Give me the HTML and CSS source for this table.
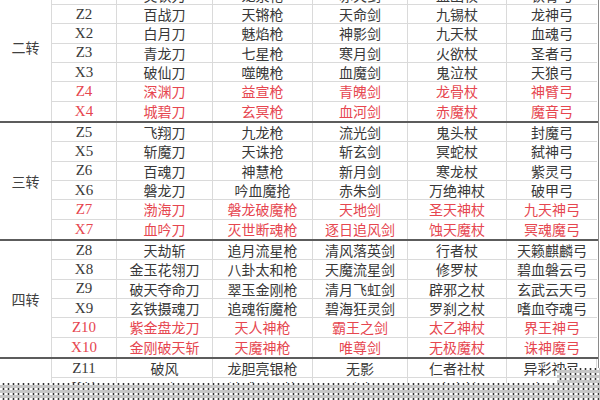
FILE: index.html
```html
<!DOCTYPE html>
<html lang="zh">
<head>
<meta charset="utf-8">
<link rel="stylesheet" href="styles.css">
</head>
<body>
<div class="sheet">
  <section class="sec sec8">
    <div class="grp">二转</div>
    <div class="c code">Z1</div><div class="c">烈风刀</div><div class="c">龙泉枪</div><div class="c">赤火剑</div><div class="c">血幽杖</div><div class="c">铁骨弓</div>
    <div class="c code">X1</div><div class="c">炎铁刀</div><div class="c">龙泉枪</div><div class="c">赤火剑</div><div class="c">血幽杖</div><div class="c">铁骨弓</div>
    <div class="c code">Z2</div><div class="c">百战刀</div><div class="c">天锵枪</div><div class="c">天命剑</div><div class="c">九锡杖</div><div class="c">龙神弓</div>
    <div class="c code">X2</div><div class="c">白月刀</div><div class="c">魅焰枪</div><div class="c">神影剑</div><div class="c">九天杖</div><div class="c">血魂弓</div>
    <div class="c code">Z3</div><div class="c">青龙刀</div><div class="c">七星枪</div><div class="c">寒月剑</div><div class="c">火欲杖</div><div class="c">圣者弓</div>
    <div class="c code">X3</div><div class="c">破仙刀</div><div class="c">噬魄枪</div><div class="c">血魔剑</div><div class="c">鬼泣杖</div><div class="c">天狼弓</div>
    <div class="c code red">Z4</div><div class="c red">深渊刀</div><div class="c red">益宣枪</div><div class="c red">青魄剑</div><div class="c red">龙骨杖</div><div class="c red">神臂弓</div>
    <div class="c code red last">X4</div><div class="c red last">城碧刀</div><div class="c red last">玄冥枪</div><div class="c red last">血河剑</div><div class="c red last">赤魔杖</div><div class="c red last">魔音弓</div>
  </section>
  <section class="sec">
    <div class="grp">三转</div>
    <div class="c code">Z5</div><div class="c">飞翔刀</div><div class="c">九龙枪</div><div class="c">流光剑</div><div class="c">鬼头杖</div><div class="c">封魔弓</div>
    <div class="c code">X5</div><div class="c">斩魔刀</div><div class="c">天诛抢</div><div class="c">斩玄剑</div><div class="c">冥蛇杖</div><div class="c">弑神弓</div>
    <div class="c code">Z6</div><div class="c">百魂刀</div><div class="c">神慧枪</div><div class="c">新月剑</div><div class="c">寒龙杖</div><div class="c">紫灵弓</div>
    <div class="c code">X6</div><div class="c">磐龙刀</div><div class="c">吟血魔抢</div><div class="c">赤朱剑</div><div class="c">万绝神杖</div><div class="c">破甲弓</div>
    <div class="c code red">Z7</div><div class="c red">渤海刀</div><div class="c red">磐龙破魔枪</div><div class="c red">天地剑</div><div class="c red">圣天神杖</div><div class="c red">九天神弓</div>
    <div class="c code red last">X7</div><div class="c red last">血吟刀</div><div class="c red last">灭世断魂枪</div><div class="c red last">逐日追风剑</div><div class="c red last">蚀天魔杖</div><div class="c red last">冥魂魔弓</div>
  </section>
  <section class="sec">
    <div class="grp">四转</div>
    <div class="c code">Z8</div><div class="c">天劫斩</div><div class="c">追月流星枪</div><div class="c">清风落英剑</div><div class="c">行者杖</div><div class="c">天籁麒麟弓</div>
    <div class="c code">X8</div><div class="c">金玉花翎刀</div><div class="c">八卦太和枪</div><div class="c">天魔流星剑</div><div class="c">修罗杖</div><div class="c">碧血磐云弓</div>
    <div class="c code">Z9</div><div class="c">破天夺命刀</div><div class="c">翠玉金刚枪</div><div class="c">清月飞虹剑</div><div class="c">辟邪之杖</div><div class="c">玄武云天弓</div>
    <div class="c code">X9</div><div class="c">玄铁摄魂刀</div><div class="c">追魂衔魔枪</div><div class="c">碧海狂灵剑</div><div class="c">罗刹之杖</div><div class="c">嗜血夺魂弓</div>
    <div class="c code red">Z10</div><div class="c red">紫金盘龙刀</div><div class="c red">天人神枪</div><div class="c red">霸王之剑</div><div class="c red">太乙神杖</div><div class="c red">界王神弓</div>
    <div class="c code red last">X10</div><div class="c red last">金刚破天斩</div><div class="c red last">天魔神枪</div><div class="c red last">唯尊剑</div><div class="c red last">无极魔杖</div><div class="c red last">诛神魔弓</div>
  </section>
  <section class="sec sec2">
    <div class="c code">Z11</div><div class="c">破风</div><div class="c">龙胆亮银枪</div><div class="c">无影</div><div class="c">仁者社杖</div><div class="c">异彩神弓</div>
    <div class="c code last">X11</div><div class="c last">开山</div><div class="c last">神威烈火枪</div><div class="c last">魂血</div><div class="c last">降魔杖</div><div class="c last">血灵弓</div>
  </section>
</div>
<div class="mask mask-band"></div>
<div class="mask mask-corner"></div>
</body>
</html>
```

FILE: styles.css
```css
html, body {
  margin: 0;
  padding: 0;
  background: #fff;
  width: 600px;
  height: 400px;
  overflow: hidden;
}

.sheet {
  width: 598px;
  margin-top: -33.7px;
  border-right: 1px solid #8a8a8a;
}

.sec {
  display: grid;
  grid-template-columns: 52px 65px 96px 100px 95px 99px 90px;
  grid-template-rows: repeat(6, 19.33px);
  border-bottom: 2px solid #5c5c5c;
  font-family: "Noto Sans CJK SC", "Noto Sans", sans-serif;
  font-size: 14px;
  color: #383838;
}

.sec8 {
  grid-template-rows: repeat(8, 19.33px);
}

.sec2 {
  grid-template-rows: repeat(2, 19.33px);
  border-bottom: none;
}

.sec2 .c:nth-child(6n+1) {
  border-right: 1px solid #dadada;
}

.sec2 .code {
  grid-column: 2;
  border-left: 1px solid #dadada;
  margin-left: -1px;
}

.grp {
  grid-row: 1 / -1;
  grid-column: 1;
  display: flex;
  align-items: center;
  justify-content: center;
  border-right: 1px solid #dadada;
  color: #404040;
  font-size: 14px;
}

.sec8 .grp {
  padding-top: 6px;
}

.c {
  box-sizing: border-box;
  display: flex;
  align-items: center;
  justify-content: center;
  border-right: 1px solid #dadada;
  border-bottom: 1px solid #dadada;
  line-height: 1;
  white-space: nowrap;
}

.c:nth-child(6n+1) {
  border-right: none;
}

.c.last {
  border-bottom: none;
}

.code {
  font-family: "Liberation Serif", "DejaVu Serif", serif;
  font-size: 15px;
  color: #3a3a3a;
}

.red {
  color: #e6464f;
}

.mask {
  position: absolute;
  background-color: #c6c6c6;
  background-image:
    radial-gradient(circle at 1px 1px, #ffffff 0.9px, transparent 1.3px),
    radial-gradient(circle at 3.5px 1px, #333333 0.7px, transparent 1.1px);
  background-size: 5px 5px;
}

.mask-band {
  left: 0;
  top: 383px;
  width: 600px;
  height: 17px;
}

.mask-corner {
  left: 557px;
  top: 368px;
  width: 43px;
  height: 15px;
}
```
